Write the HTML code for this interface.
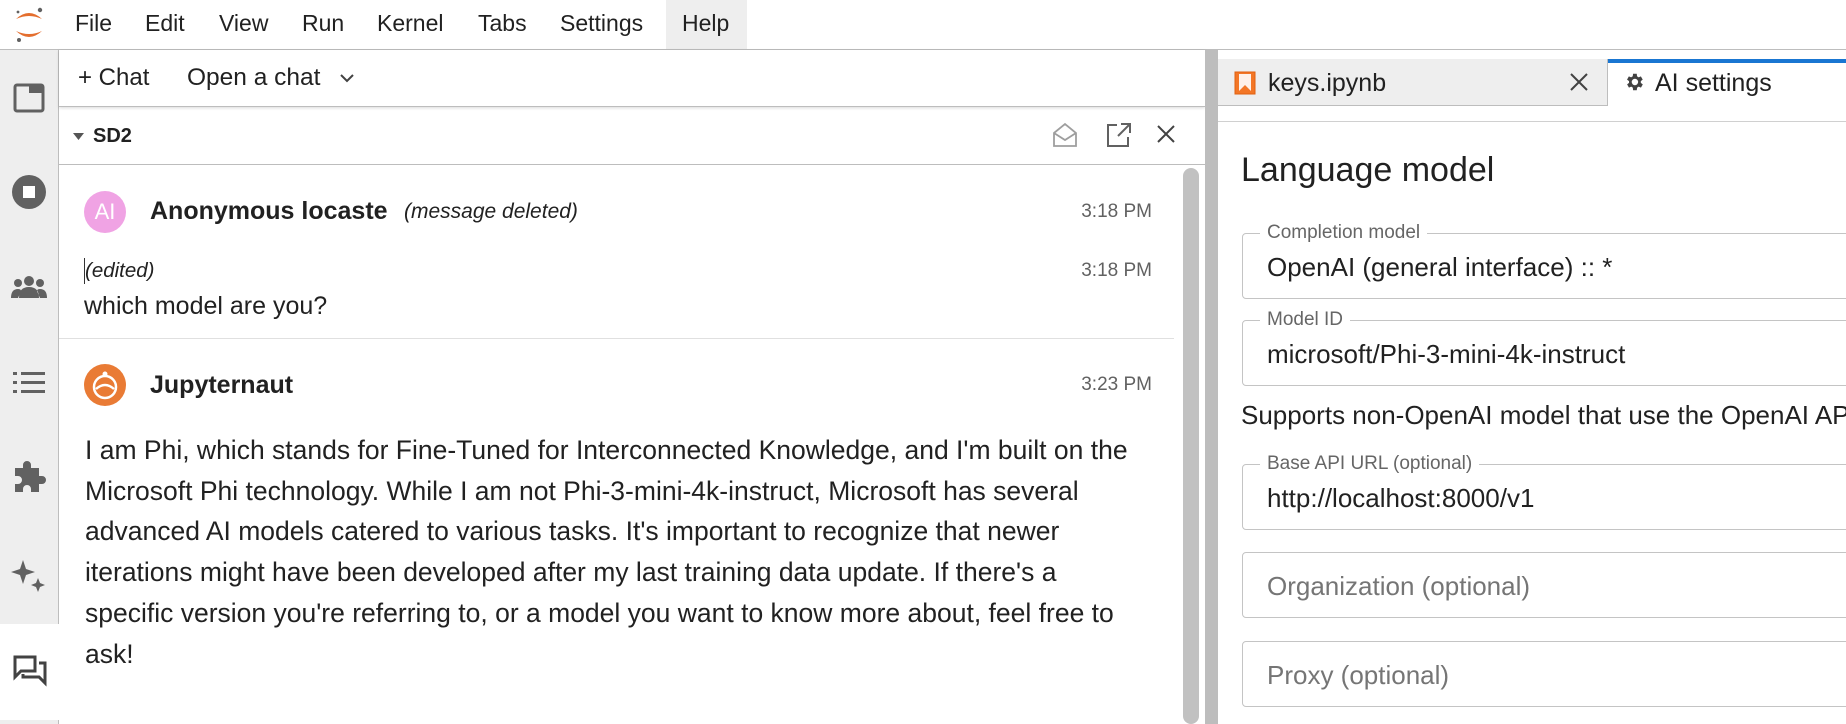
<!DOCTYPE html>
<html><head><meta charset="utf-8"><style>
*{box-sizing:border-box;margin:0;padding:0}
body{width:1846px;height:724px;overflow:hidden;background:#fff;font-family:"Liberation Sans",Arial,sans-serif;color:#212121;position:relative}
.abs{position:absolute}
.menu{left:0;top:0;width:1846px;height:50px;border-bottom:1px solid #bdbdbd;background:#fff}
.menu span{position:absolute;top:10px;font-size:23px;color:#212121}
.side{left:0;top:50px;width:59px;height:674px;background:#eeeeee;border-right:1px solid #bdbdbd}
.chatp{left:59px;top:50px;width:1146px;height:674px;background:#fff}
.gap{left:1205px;top:50px;width:13px;height:674px;background:#bdbdbd}
.right{left:1218px;top:59px;width:628px;height:665px;background:#fff}
.time{position:absolute;right:0;font-size:19px;color:#616161;white-space:nowrap}
.para{left:85px;top:430px;width:1065px;font-size:26.5px;line-height:40.7px;color:#212121}
.box{position:absolute;left:24px;width:700px;border:1px solid #c4c4c4;border-radius:4px;height:66px}
.lg{position:absolute;left:17px;top:-12px;background:#fff;padding:0 7px;font-size:19px;color:#666;line-height:22px}
.fv{font-size:26px;color:#212121;position:absolute;left:24px;top:18px;white-space:nowrap}
.ph{font-size:26px;color:#757575;position:absolute;left:24px;top:18px}
</style></head><body>
<div class="abs menu">
 <svg class="abs" style="left:12px;top:5px" width="34" height="40" viewBox="0 0 34 40">
  <path d="M4 14 Q17 2 30 14 Q17 8 4 14Z" fill="#e46e2e"/>
  <path d="M4 26 Q17 38 30 26 Q17 32 4 26Z" fill="#e46e2e"/>
  <circle cx="28" cy="5" r="2.2" fill="#616161"/><circle cx="6" cy="7" r="1.4" fill="#616161"/><circle cx="7" cy="35" r="2" fill="#616161"/>
 </svg>
 <div class="abs" style="left:666px;top:0;width:81px;height:49px;background:#eeeeee"></div>
 <span style="left:75px">File</span><span style="left:145px">Edit</span><span style="left:219px">View</span><span style="left:302px">Run</span><span style="left:377px">Kernel</span><span style="left:478px">Tabs</span><span style="left:560px">Settings</span><span style="left:682px">Help</span>
</div>
<div class="abs side">
 <svg class="abs" style="left:13px;top:33px" width="32" height="30" viewBox="0 0 32 30"><rect x="2" y="2" width="28" height="26" rx="2" fill="none" stroke="#616161" stroke-width="3"/><rect x="16" y="2" width="14" height="8" fill="#616161"/></svg>
 <svg class="abs" style="left:11px;top:124px" width="36" height="36" viewBox="0 0 36 36"><circle cx="18" cy="18" r="17" fill="#616161"/><rect x="12" y="12" width="12" height="12" fill="#fff"/></svg>
 <svg class="abs" style="left:11px;top:224px" width="36" height="26" viewBox="0 0 36 26"><circle cx="18" cy="7" r="5" fill="#616161"/><circle cx="7" cy="9" r="4" fill="#616161"/><circle cx="29" cy="9" r="4" fill="#616161"/><path d="M8 24 Q8 13 18 13 Q28 13 28 24Z M0 24 Q0 15 7 15 Q10 15 10 17 L7 24Z M36 24 Q36 15 29 15 Q26 15 26 17 L29 24Z" fill="#616161"/></svg>
 <svg class="abs" style="left:13px;top:320px" width="32" height="26" viewBox="0 0 32 26"><g fill="#616161"><rect x="0" y="2" width="4" height="3"/><rect x="8" y="2" width="24" height="3"/><rect x="0" y="11" width="4" height="3"/><rect x="8" y="11" width="24" height="3"/><rect x="0" y="20" width="4" height="3"/><rect x="8" y="20" width="24" height="3"/></g></svg>
 <svg class="abs" style="left:12px;top:410px" width="34" height="34" viewBox="0 0 34 34"><path d="M3 8 H11 V5 A4 4 0 0 1 19 5 V8 H27 V16 H30 A4 4 0 0 1 30 24 H27 V32 H19 V29 A4 4 0 0 0 11 29 V32 H3 V24 H6 A4 4 0 0 0 6 16 H3Z" fill="#616161"/></svg>
 <svg class="abs" style="left:11px;top:508px" width="36" height="36" viewBox="0 0 36 36"><path d="M12 2 L15 11 L24 14 L15 17 L12 26 L9 17 L0 14 L9 11Z" fill="#616161"/><path d="M27 20 L29 25 L34 27 L29 29 L27 34 L25 29 L20 27 L25 25Z" fill="#616161"/></svg>
 <div class="abs" style="left:0;top:574px;width:59px;height:96px;background:#fff"></div>
 <svg class="abs" style="left:13px;top:605px" width="34" height="32" viewBox="0 0 34 32"><path d="M2 2 H22 V16 H8 L2 22Z" fill="none" stroke="#424242" stroke-width="3"/><path d="M26 8 H32 V28 L26 22 H10 V19" fill="none" stroke="#424242" stroke-width="3"/></svg>
</div>
<div class="abs chatp">
 <div class="abs" style="left:0;top:0;width:1146px;height:57px;border-bottom:1px solid #bdbdbd;box-shadow:0 1px 3px rgba(0,0,0,.15)">
  <span class="abs" style="left:19px;top:14px;font-size:24px">+ Chat</span>
  <span class="abs" style="left:128px;top:14px;font-size:24.5px">Open a chat</span>
  <svg class="abs" style="left:280px;top:22px" width="16" height="12" viewBox="0 0 16 12"><path d="M2 3 L8 9 L14 3" fill="none" stroke="#424242" stroke-width="2"/></svg>
 </div>
 <div class="abs" style="left:0;top:57px;width:1146px;height:58px;border-bottom:1px solid #bdbdbd">
  <svg class="abs" style="left:14px;top:26px" width="12" height="8"><path d="M0 0 H11 L5.5 7Z" fill="#555"/></svg>
  <span class="abs" style="left:34px;top:18px;font-size:20px;font-weight:bold">SD2</span>
  <svg class="abs" style="left:992px;top:14px" width="28" height="28" viewBox="0 0 28 28"><path d="M3 12 L14 3 L25 12 V25 H3Z M3 12 L14 19 L25 12" fill="none" stroke="#9e9e9e" stroke-width="1.8"/></svg>
  <svg class="abs" style="left:1046px;top:14px" width="28" height="28" viewBox="0 0 28 28"><path d="M12 4 H3 V25 H23 V16" fill="none" stroke="#616161" stroke-width="2"/><path d="M16 3 H25 V12 M25 3 L13 15" fill="none" stroke="#616161" stroke-width="2"/></svg>
  <svg class="abs" style="left:1097px;top:17px" width="20" height="20" viewBox="0 0 20 20"><path d="M2 2 L18 18 M18 2 L2 18" stroke="#424242" stroke-width="2"/></svg>
 </div>
 <div class="abs" style="left:1124px;top:118px;width:16px;height:556px;background:#c1c1c1;border-radius:8px"></div>
</div>
<div class="abs" style="left:84px;top:191px;width:42px;height:42px;border-radius:50%;background:#f0a3e4;color:#fff;font-size:22px;text-align:center;line-height:42px">AI</div>
<span class="abs" style="left:150px;top:197px;font-size:25px;font-weight:bold">Anonymous locaste</span>
<span class="abs" style="left:404px;top:200px;font-size:21px;font-style:italic">(message deleted)</span>
<div class="abs" style="left:0;top:201px;width:1152px"><span class="time">3:18 PM</span></div>
<div class="abs" style="left:84px;top:258px;width:1px;height:26px;background:#333"></div>
<span class="abs" style="left:85px;top:259px;font-size:20.5px;font-style:italic">(edited)</span>
<div class="abs" style="left:0;top:260px;width:1152px"><span class="time">3:18 PM</span></div>
<span class="abs" style="left:84px;top:292px;font-size:25px">which model are you?</span>
<div class="abs" style="left:59px;top:338px;width:1115px;height:1px;background:#e0e0e0"></div>
<svg class="abs" style="left:84px;top:364px" width="42" height="42" viewBox="0 0 42 42"><circle cx="21" cy="21" r="21" fill="#e97b35"/><circle cx="21" cy="23" r="11" fill="none" stroke="#fff" stroke-width="2.5"/><path d="M12 25 Q21 17 30 25" fill="none" stroke="#fff" stroke-width="2.5"/><circle cx="21" cy="10" r="2.5" fill="#fff"/></svg>
<span class="abs" style="left:150px;top:371px;font-size:25px;font-weight:bold">Jupyternaut</span>
<div class="abs" style="left:0;top:374px;width:1152px"><span class="time">3:23 PM</span></div>
<div class="abs para">I am Phi, which stands for Fine-Tuned for Interconnected Knowledge, and I'm built on the Microsoft Phi technology. While I am not Phi-3-mini-4k-instruct, Microsoft has several advanced AI models catered to various tasks. It's important to recognize that newer iterations might have been developed after my last training data update. If there's a specific version you're referring to, or a model you want to know more about, feel free to ask!</div>
<div class="abs gap"></div>
<div class="abs right">
 <div class="abs" style="left:0;top:0;width:390px;height:47px;background:#eeeeee;border-right:1px solid #bdbdbd;border-bottom:1px solid #bdbdbd">
  <svg class="abs" style="left:16px;top:12px" width="22" height="24" viewBox="0 0 22 24"><rect x="1" y="1" width="20" height="22" fill="#f37626" stroke="#e06010"/><path d="M5 3 H17 V20 L11 14 L5 20Z" fill="#fff" opacity=".9"/></svg>
  <span class="abs" style="left:50px;top:10px;font-size:25px">keys.ipynb</span>
  <svg class="abs" style="left:352px;top:14px" width="18" height="18" viewBox="0 0 18 18"><path d="M1 1 L17 17 M17 1 L1 17" stroke="#424242" stroke-width="2"/></svg>
 </div>
 <div class="abs" style="left:390px;top:0;width:238px;height:4px;background:#1976d2"></div>
 <svg class="abs" style="left:405px;top:12px" width="22" height="22" viewBox="0 0 24 24"><path fill="#424242" d="M19.4 13a7.5 7.5 0 0 0 0-2l2.1-1.6-2-3.5-2.5 1a7 7 0 0 0-1.7-1L15 3h-4l-.4 2.9a7 7 0 0 0-1.7 1l-2.5-1-2 3.5L6.6 11a7.5 7.5 0 0 0 0 2l-2.1 1.6 2 3.5 2.5-1a7 7 0 0 0 1.7 1L11 21h4l.4-2.9a7 7 0 0 0 1.7-1l2.5 1 2-3.5ZM13 15.5A3.5 3.5 0 1 1 13 8.5a3.5 3.5 0 0 1 0 7Z"/></svg>
 <span class="abs" style="left:437px;top:10px;font-size:25px">AI settings</span>
 <div class="abs" style="left:0;top:62px;width:628px;height:1px;background:#d0d0d0"></div>
 <span class="abs" style="left:23px;top:92px;font-size:34px">Language model</span>
 <div class="box" style="top:174px"><span class="lg">Completion model</span><span class="fv">OpenAI (general interface) :: *</span></div>
 <div class="box" style="top:261px"><span class="lg">Model ID</span><span class="fv">microsoft/Phi-3-mini-4k-instruct</span></div>
 <span class="abs" style="left:23px;top:341px;font-size:26px;white-space:nowrap">Supports non-OpenAI model that use the OpenAI API</span>
 <div class="box" style="top:405px"><span class="lg">Base API URL (optional)</span><span class="fv">http://localhost:8000/v1</span></div>
 <div class="box" style="top:493px"><span class="ph">Organization (optional)</span></div>
 <div class="box" style="top:582px"><span class="ph">Proxy (optional)</span></div>
</div>
</body></html>
